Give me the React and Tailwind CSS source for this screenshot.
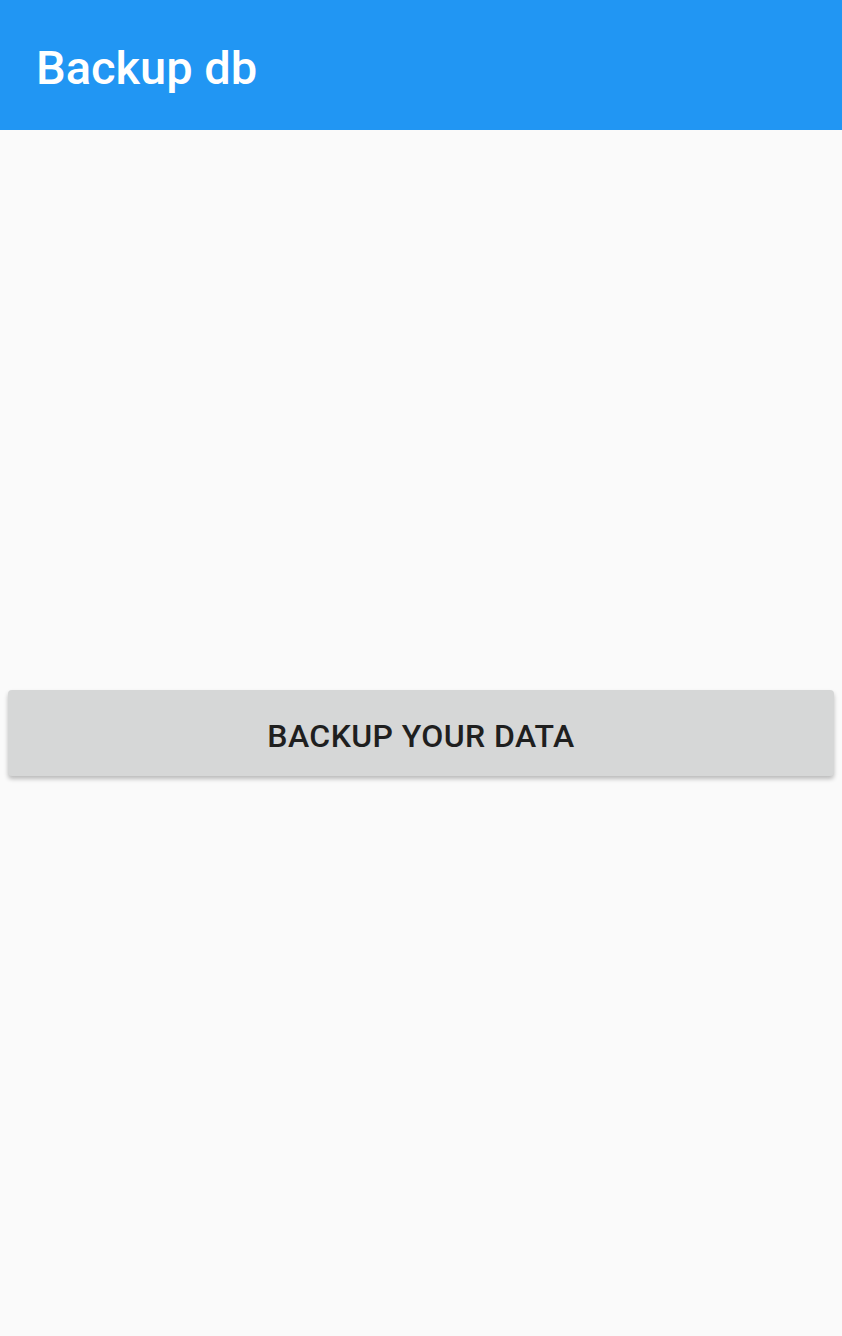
import React from 'react';

const App = () => {
  return (
    <div
      className="flex flex-col w-full h-[1336px] bg-[#fafafa]"
      style={{ fontFamily: 'Roboto, "Noto Sans", sans-serif' }}
    >
      <header className="h-[130px] bg-[#2196f3] flex items-center px-[36px] shrink-0">
        <h1 className="text-white text-[47px] font-medium leading-none mt-[4px]">Backup db</h1>
      </header>
      <main className="flex-1 flex items-center px-[8px]">
        <button className="w-full h-[86px] pt-[5px] bg-[#d6d7d7] rounded-[4px] shadow-[0_3px_4px_rgba(0,0,0,0.25)] text-[#1f1f1f] text-[32px] font-medium tracking-[0.4px]">
          BACKUP YOUR DATA
        </button>
      </main>
    </div>
  );
};

export default App;
